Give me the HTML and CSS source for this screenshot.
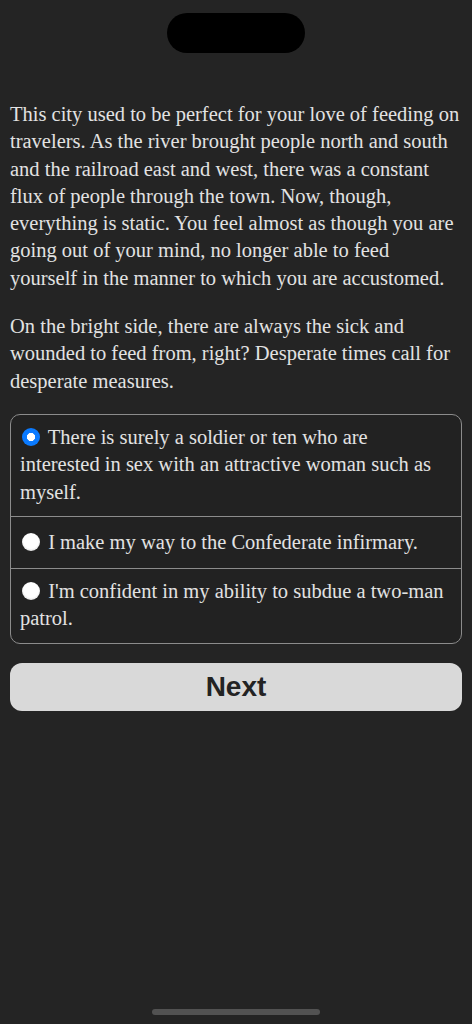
FILE: index.html
```html
<!DOCTYPE html>
<html lang="en">
<head>
<meta charset="utf-8">
<title>Story</title>
<link rel="stylesheet" href="styles.css">
</head>
<body>
<div class="screen">
  <div class="island"></div>
  <main class="story">
    <p class="para">This city used to be perfect for your love of feeding on travelers. As the river brought people north and south and the railroad east and west, there was a constant flux of people through the town. Now, though, everything is static. You feel almost as though you are going out of your mind, no longer able to feed yourself in the manner to which you are accustomed.</p>
    <p class="para">On the bright side, there are always the sick and wounded to feed from, right? Desperate times call for desperate measures.</p>
    <form class="choices">
      <label class="choice"><input class="radio" type="radio" name="choice" checked> There is surely a soldier or ten who are interested in sex with an attractive woman such as myself.</label>
      <label class="choice choice-single"><input class="radio" type="radio" name="choice"> I make my way to the Confederate infirmary.</label>
      <label class="choice"><input class="radio" type="radio" name="choice"> I'm confident in my ability to subdue a two-man patrol.</label>
    </form>
    <button class="next" type="button">Next</button>
  </main>
  <div class="home-bar"></div>
</div>
</body>
</html>
```

FILE: styles.css
```css
html, body {
  margin: 0;
  padding: 0;
  background: #242424;
}

.screen {
  min-height: 1024px;
  box-sizing: border-box;
  display: flex;
  flex-direction: column;
  padding: 0 10px;
}

.island {
  width: 138px;
  height: 40px;
  border-radius: 20px;
  background: #000;
  margin: 13px auto 0;
}

.story {
  margin-top: 48px;
  font-family: "Liberation Serif", "Times New Roman", serif;
  font-size: 20.5px;
  line-height: 27.3px;
  color: #e2e2e2;
}

.para {
  margin: 0 2px 19px 0;
}

.para:first-child {
  margin-bottom: 21px;
}

.choices {
  margin: 0;
  border: 1px solid #8c8c8c;
  border-radius: 10px;
  background: #222;
  overflow: hidden;
}

.choice {
  display: block;
  padding: 9px 9px 10px;
  border-top: 1px solid #8c8c8c;
}

.choice:first-child {
  border-top: none;
}

.choice-single {
  padding-top: 12px;
  padding-bottom: 12px;
}

.radio {
  appearance: none;
  -webkit-appearance: none;
  width: 18px;
  height: 18px;
  margin: 0 3px 0 2px;
  border-radius: 50%;
  background: radial-gradient(circle at 50% 45%, #ffffff 55%, #d8d8d8 80%, #9a9a9a 100%);
  vertical-align: -2px;
  box-sizing: border-box;
}

.radio:checked {
  background: radial-gradient(circle, #ffffff 0 3.8px, #0a7aff 4.4px);
}

.next {
  display: block;
  width: 100%;
  height: 48px;
  margin-top: 19px;
  border: none;
  border-radius: 12px;
  background: #d9d9d9;
  color: #232323;
  font-family: "Liberation Sans", Arial, sans-serif;
  font-weight: bold;
  font-size: 28px;
  line-height: 48px;
  padding: 0;
}

.home-bar {
  width: 168px;
  height: 6px;
  border-radius: 3px;
  background: #525252;
  margin: auto auto 9px;
}
```
